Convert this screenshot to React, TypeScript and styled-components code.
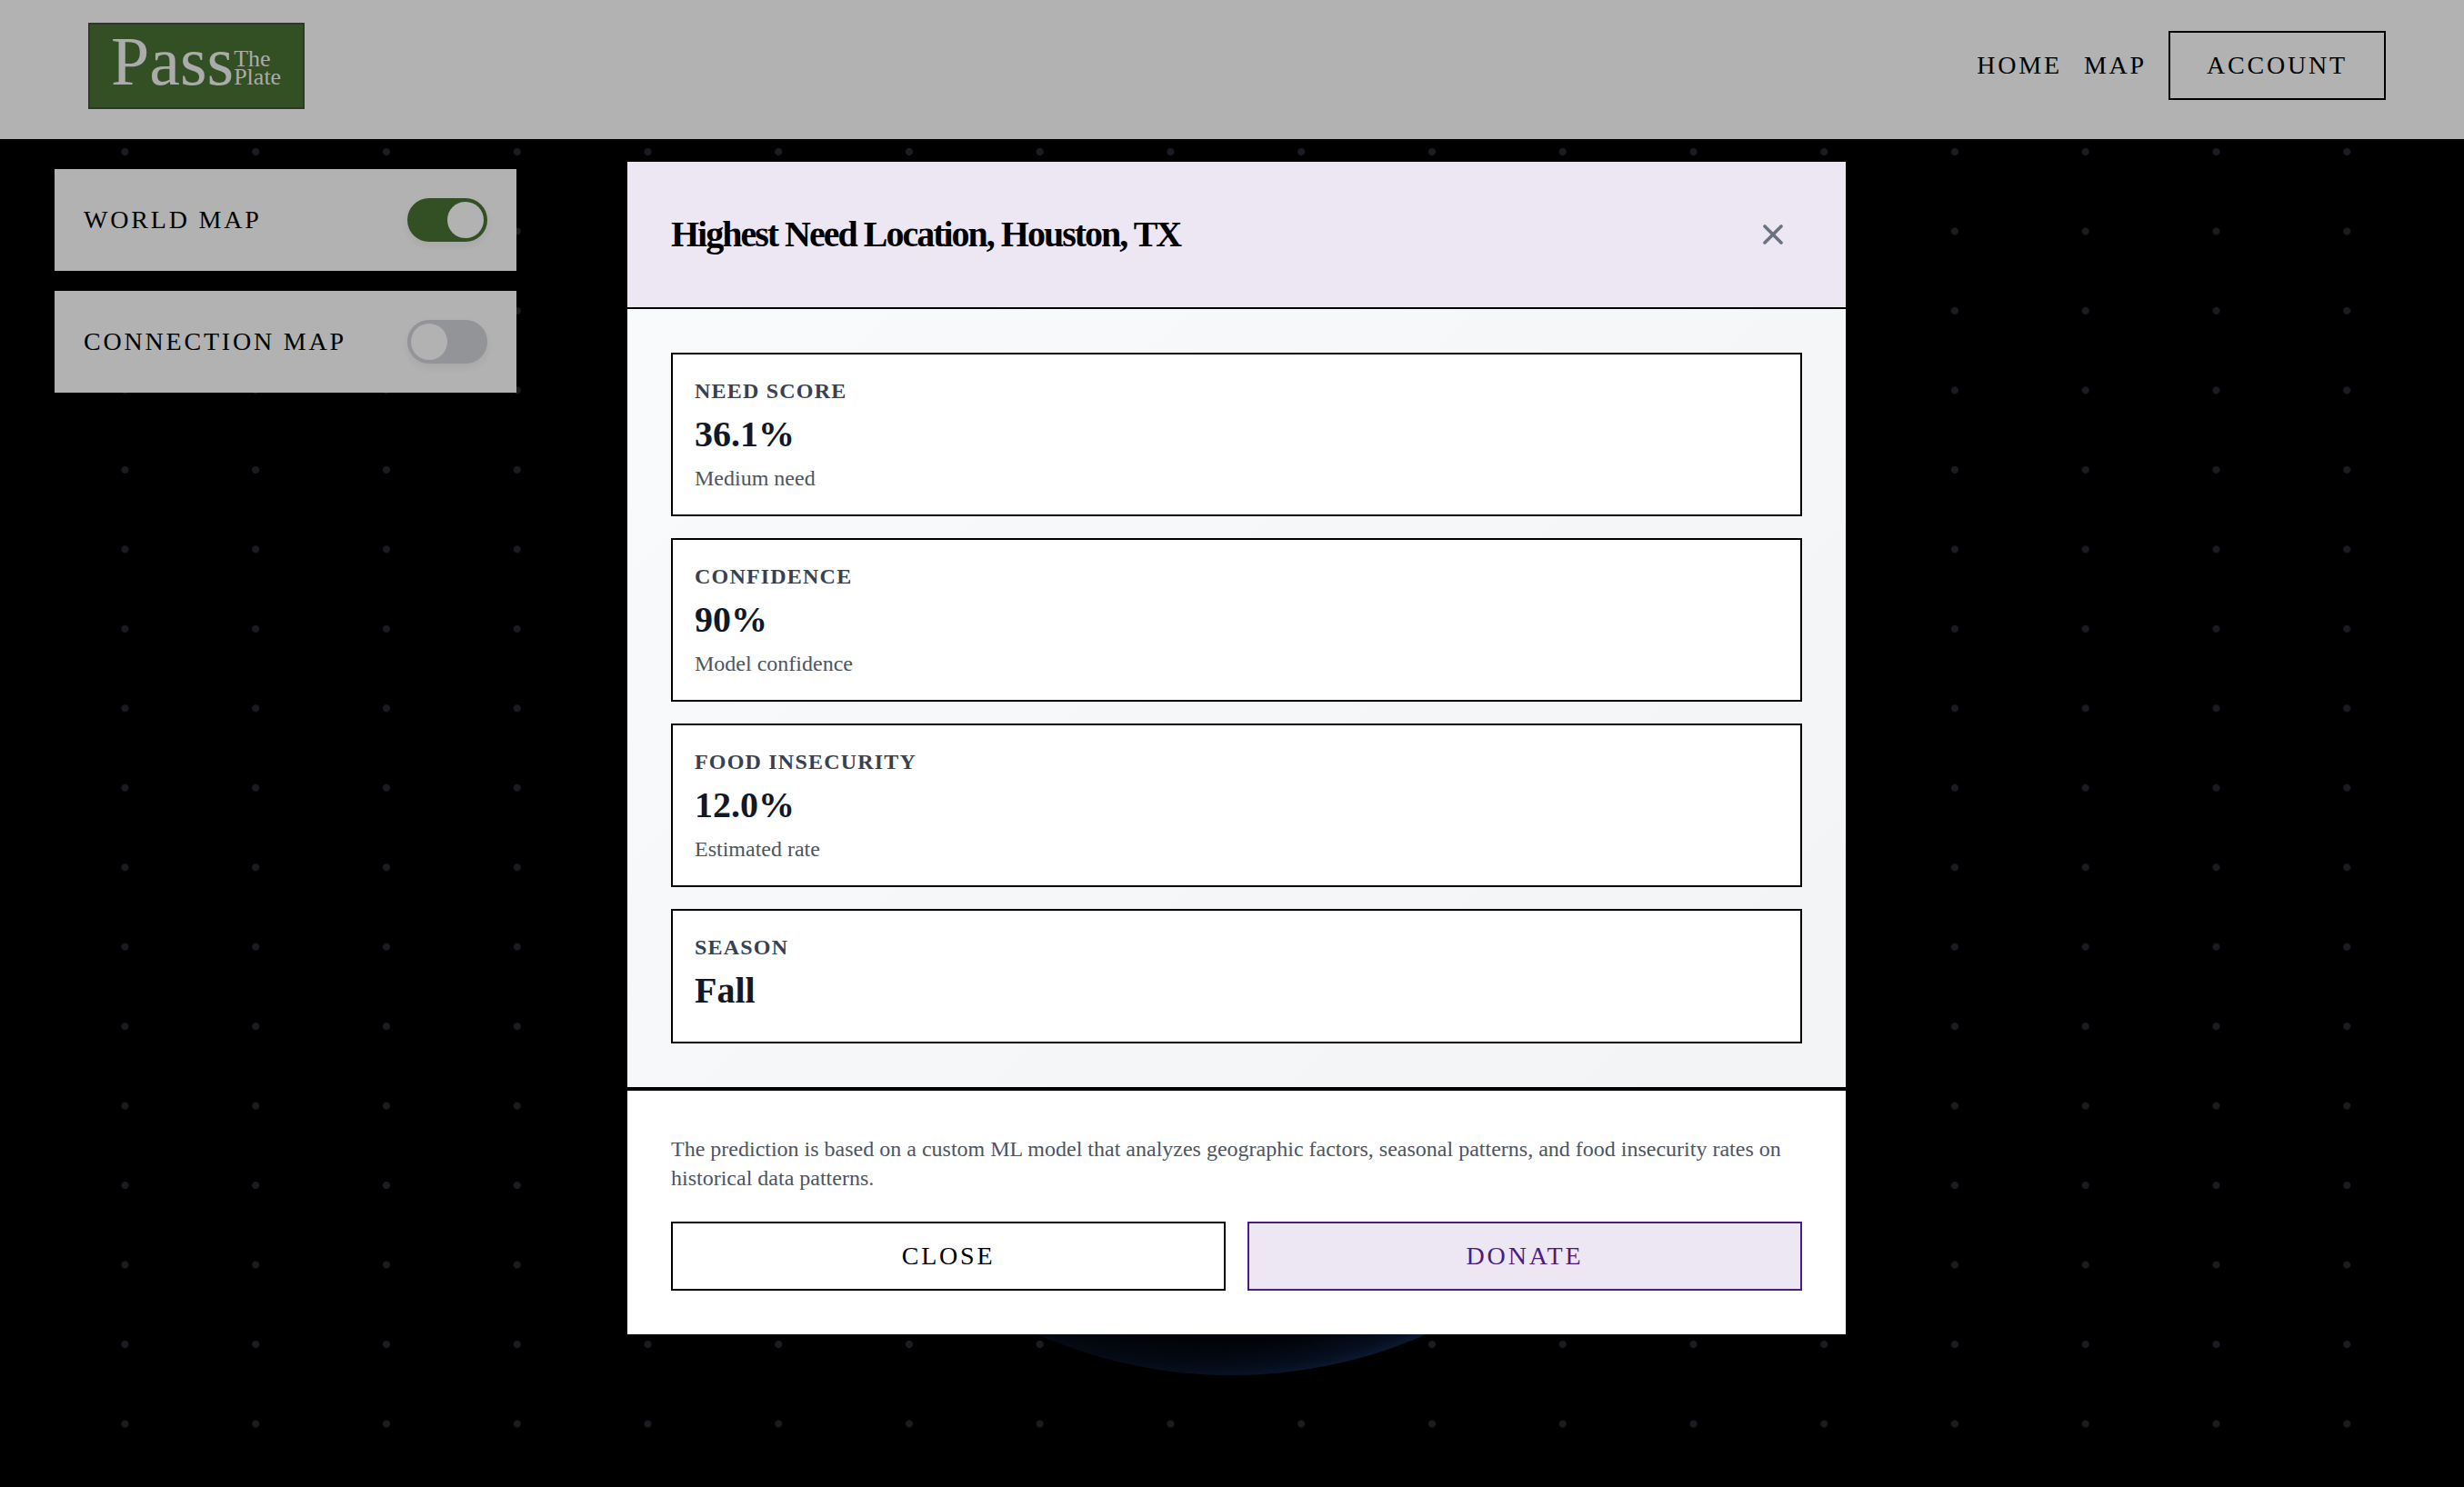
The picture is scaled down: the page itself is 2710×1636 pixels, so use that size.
import React from "react";
import styled, { createGlobalStyle } from "styled-components";
import { X } from "lucide-react";

const Global = createGlobalStyle`
  html, body { margin: 0; padding: 0; background: #000; }
  * { box-sizing: border-box; }
  body { font-family: "Liberation Serif", "Times New Roman", serif; color: #000; }
`;

const Page = styled.div`
  position: relative;
  width: 100%;
  height: 100vh;
  overflow: hidden;
  background-color: #000;
  background-image: radial-gradient(circle at center, #1a1c22 0, #1a1c22 3.6px, transparent 4.4px);
  background-size: 143.75px 87.47px;
  background-position: 65.6px 35.8px;
`;

const Header = styled.header`
  position: relative;
  height: 153px;
  background: #b2b2b2;
  display: flex;
  align-items: center;
  justify-content: space-between;
  padding: 0 86px 9px 97px;
`;

const Logo = styled.div`
  width: 238px;
  height: 95px;
  background: #335024;
  border: 2px solid #2a3a24;
  color: #ababab;
  display: flex;
  align-items: last baseline;
  padding: 0 0 10px 23px;
`;

const LogoBig = styled.span`
  font-size: 76px;
  letter-spacing: 0;
  line-height: 81px;
`;

const LogoStack = styled.span`
  display: flex;
  flex-direction: column;
  font-size: 26px;
  line-height: 20px;
`;

const Nav = styled.nav`
  display: flex;
  align-items: center;
  gap: 24px;
`;

const NavLink = styled.a`
  font-size: 28px;
  letter-spacing: 2.8px;
  color: #000;
`;

const AccountButton = styled.button`
  width: 239px;
  height: 76px;
  background: transparent;
  border: 2px solid #000;
  font: inherit;
  font-size: 28px;
  letter-spacing: 2.8px;
  color: #000;
`;

const Sidebar = styled.aside`
  position: relative;
  width: 508px;
  margin: 33px 0 0 60px;
  display: flex;
  flex-direction: column;
  gap: 22px;
`;

const ToggleCard = styled.div`
  height: 112px;
  background: #b2b2b2;
  display: flex;
  align-items: center;
  justify-content: space-between;
  padding: 0 32px;
  font-size: 28px;
  letter-spacing: 2.8px;
`;

const Switch = styled.span<{ $on: boolean }>`
  width: 88px;
  height: 48px;
  border-radius: 24px;
  padding: 4px;
  display: flex;
  justify-content: ${(p) => (p.$on ? "flex-end" : "flex-start")};
  background: ${(p) => (p.$on ? "#335024" : "#939497")};
  box-shadow: 0 4px 8px rgba(0, 0, 0, 0.06);
`;

const Knob = styled.span`
  width: 40px;
  height: 40px;
  border-radius: 50%;
  background: #b2b2b2;
`;

const Globe = styled.svg`
  position: absolute;
  left: 824px;
  top: 451px;
  width: 1062px;
  height: 1062px;
`;

const Overlay = styled.div`
  position: absolute;
  inset: 0;
  display: flex;
  align-items: center;
  justify-content: center;
  padding: 10px 0 0 10px;
`;

const Modal = styled.section`
  width: 1340px;
  background: #fff;
`;

const ModalHeader = styled.div`
  height: 162px;
  background: #ede7f3;
  border-bottom: 2px solid #000;
  display: flex;
  align-items: center;
  justify-content: space-between;
  padding: 0 48px;
`;

const Title = styled.h2`
  margin: 0;
  font-size: 40px;
  line-height: 56px;
  font-weight: 700;
  letter-spacing: -2px;
  color: #000;
`;

const CloseIcon = styled(X)`
  width: 36px;
  height: 36px;
  color: #6b7280;
  margin-right: 14px;
`;

const ModalBody = styled.div`
  padding: 48px;
  background: linear-gradient(135deg, #f9fafb, #f3f4f6);
  display: flex;
  flex-direction: column;
  gap: 24px;
`;

const Stat = styled.div`
  border: 2px solid #000;
  background: #fff;
  padding: 24px;
`;

const StatLabel = styled.div`
  font-size: 24px;
  line-height: 32px;
  font-weight: 700;
  letter-spacing: 1.2px;
  color: #374151;
`;

const StatValue = styled.div`
  font-size: 40px;
  line-height: 56px;
  font-weight: 700;
  color: #111827;
  margin: 4px 0;
`;

const StatNote = styled.div`
  font-size: 24px;
  line-height: 32px;
  color: #4b5563;
`;

const ModalFooter = styled.div`
  border-top: 4px solid #000;
  padding: 48px;
  background: #fff;
`;

const Explain = styled.p`
  margin: 0 0 32px;
  font-size: 24px;
  line-height: 32px;
  color: #4b5563;
`;

const Actions = styled.div`
  display: grid;
  grid-template-columns: 1fr 1fr;
  gap: 24px;
`;

const ActionButton = styled.button<{ $primary?: boolean }>`
  height: 76px;
  font: inherit;
  font-size: 28px;
  letter-spacing: 2.8px;
  border: 2px solid ${(p) => (p.$primary ? "#4c1d80" : "#000")};
  background: ${(p) => (p.$primary ? "#ede7f3" : "#fff")};
  color: ${(p) => (p.$primary ? "#4c1d80" : "#000")};
`;

const stats = [
  { label: "NEED SCORE", value: "36.1%", note: "Medium need" },
  { label: "CONFIDENCE", value: "90%", note: "Model confidence" },
  { label: "FOOD INSECURITY", value: "12.0%", note: "Estimated rate" },
  { label: "SEASON", value: "Fall" },
];

export default function App() {
  return (
    <Page>
      <Global />
      <Header>
        <Logo>
          <LogoBig>Pass</LogoBig>
          <LogoStack>
            <span>The</span>
            <span>Plate</span>
          </LogoStack>
        </Logo>
        <Nav>
          <NavLink>HOME</NavLink>
          <NavLink>MAP</NavLink>
          <AccountButton>ACCOUNT</AccountButton>
        </Nav>
      </Header>
      <Sidebar>
        <ToggleCard>
          WORLD MAP
          <Switch $on>
            <Knob />
          </Switch>
        </ToggleCard>
        <ToggleCard>
          CONNECTION MAP
          <Switch $on={false}>
            <Knob />
          </Switch>
        </ToggleCard>
      </Sidebar>
      <Globe viewBox="0 0 1062 1062">
        <defs>
          <radialGradient id="rim" cx="50%" cy="50%" r="50%">
            <stop offset="0%" stopColor="#000106" />
            <stop offset="93%" stopColor="#01030a" />
            <stop offset="98%" stopColor="#060f20" />
            <stop offset="100%" stopColor="#0a1830" />
          </radialGradient>
          <linearGradient id="shade" x1="0.18" y1="0" x2="0.62" y2="0">
            <stop offset="0%" stopColor="#000" stopOpacity="0.9" />
            <stop offset="100%" stopColor="#000" stopOpacity="0" />
          </linearGradient>
        </defs>
        <circle cx="531" cy="531" r="531" fill="url(#rim)" />
        <circle cx="531" cy="531" r="531" fill="url(#shade)" />
      </Globe>
      <Overlay>
        <Modal>
          <ModalHeader>
            <Title>Highest Need Location, Houston, TX</Title>
            <CloseIcon strokeWidth={2.4} />
          </ModalHeader>
          <ModalBody>
            {stats.map((s) => (
              <Stat key={s.label}>
                <StatLabel>{s.label}</StatLabel>
                <StatValue>{s.value}</StatValue>
                {s.note && <StatNote>{s.note}</StatNote>}
              </Stat>
            ))}
          </ModalBody>
          <ModalFooter>
            <Explain>
              The prediction is based on a custom ML model that analyzes geographic factors, seasonal patterns, and food
              insecurity rates on historical data patterns.
            </Explain>
            <Actions>
              <ActionButton>CLOSE</ActionButton>
              <ActionButton $primary>DONATE</ActionButton>
            </Actions>
          </ModalFooter>
        </Modal>
      </Overlay>
    </Page>
  );
}
